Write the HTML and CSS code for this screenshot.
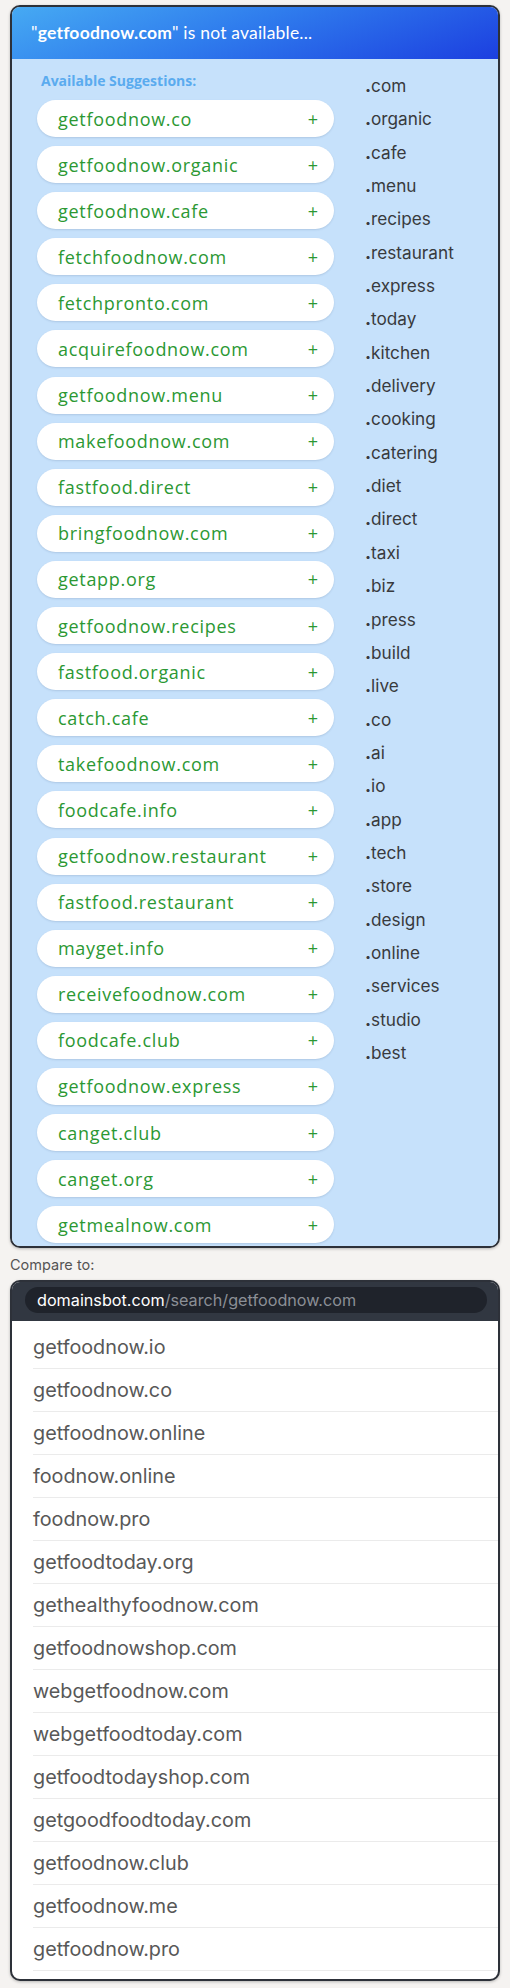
FILE: index.html
```html
<!DOCTYPE html>
<html>
<head>
<meta charset="utf-8">
<link rel="stylesheet" href="styles.css">
</head>
<body>
<div class="card">
  <div class="card-head">"<b>getfoodnow.com</b>" is not available...</div>
  <div class="card-body">
    <div class="sugg">
      <div class="label">Available Suggestions:</div>
      <div class="pills">
        <div class="pill"><span>getfoodnow.co</span><span class="plus">+</span></div>
        <div class="pill"><span>getfoodnow.organic</span><span class="plus">+</span></div>
        <div class="pill"><span>getfoodnow.cafe</span><span class="plus">+</span></div>
        <div class="pill"><span>fetchfoodnow.com</span><span class="plus">+</span></div>
        <div class="pill"><span>fetchpronto.com</span><span class="plus">+</span></div>
        <div class="pill"><span>acquirefoodnow.com</span><span class="plus">+</span></div>
        <div class="pill"><span>getfoodnow.menu</span><span class="plus">+</span></div>
        <div class="pill"><span>makefoodnow.com</span><span class="plus">+</span></div>
        <div class="pill"><span>fastfood.direct</span><span class="plus">+</span></div>
        <div class="pill"><span>bringfoodnow.com</span><span class="plus">+</span></div>
        <div class="pill"><span>getapp.org</span><span class="plus">+</span></div>
        <div class="pill"><span>getfoodnow.recipes</span><span class="plus">+</span></div>
        <div class="pill"><span>fastfood.organic</span><span class="plus">+</span></div>
        <div class="pill"><span>catch.cafe</span><span class="plus">+</span></div>
        <div class="pill"><span>takefoodnow.com</span><span class="plus">+</span></div>
        <div class="pill"><span>foodcafe.info</span><span class="plus">+</span></div>
        <div class="pill"><span>getfoodnow.restaurant</span><span class="plus">+</span></div>
        <div class="pill"><span>fastfood.restaurant</span><span class="plus">+</span></div>
        <div class="pill"><span>mayget.info</span><span class="plus">+</span></div>
        <div class="pill"><span>receivefoodnow.com</span><span class="plus">+</span></div>
        <div class="pill"><span>foodcafe.club</span><span class="plus">+</span></div>
        <div class="pill"><span>getfoodnow.express</span><span class="plus">+</span></div>
        <div class="pill"><span>canget.club</span><span class="plus">+</span></div>
        <div class="pill"><span>canget.org</span><span class="plus">+</span></div>
        <div class="pill"><span>getmealnow.com</span><span class="plus">+</span></div>
      </div>
    </div>
    <ul class="tlds">
      <li><b>.</b>com</li><li><b>.</b>organic</li><li><b>.</b>cafe</li><li><b>.</b>menu</li><li><b>.</b>recipes</li>
      <li><b>.</b>restaurant</li><li><b>.</b>express</li><li><b>.</b>today</li><li><b>.</b>kitchen</li><li><b>.</b>delivery</li>
      <li><b>.</b>cooking</li><li><b>.</b>catering</li><li><b>.</b>diet</li><li><b>.</b>direct</li><li><b>.</b>taxi</li>
      <li><b>.</b>biz</li><li><b>.</b>press</li><li><b>.</b>build</li><li><b>.</b>live</li><li><b>.</b>co</li>
      <li><b>.</b>ai</li><li><b>.</b>io</li><li><b>.</b>app</li><li><b>.</b>tech</li><li><b>.</b>store</li>
      <li><b>.</b>design</li><li><b>.</b>online</li><li><b>.</b>services</li><li><b>.</b>studio</li><li><b>.</b>best</li>
    </ul>
  </div>
</div>
<div class="compare">Compare to:</div>
<div class="browser">
  <div class="browser-head">
    <div class="addr"><span class="host">domainsbot.com</span><span class="path">/search/getfoodnow.com</span></div>
  </div>
  <ul class="results">
    <li>getfoodnow.io</li>
    <li>getfoodnow.co</li>
    <li>getfoodnow.online</li>
    <li>foodnow.online</li>
    <li>foodnow.pro</li>
    <li>getfoodtoday.org</li>
    <li>gethealthyfoodnow.com</li>
    <li>getfoodnowshop.com</li>
    <li>webgetfoodnow.com</li>
    <li>webgetfoodtoday.com</li>
    <li>getfoodtodayshop.com</li>
    <li>getgoodfoodtoday.com</li>
    <li>getfoodnow.club</li>
    <li>getfoodnow.me</li>
    <li>getfoodnow.pro</li>
  </ul>
</div>
</body>
</html>
```
FILE: styles.css
```css
* { box-sizing: border-box; }
html, body { margin: 0; padding: 0; }
body {
  background: #f5f3f1;
  padding: 5px 10px 4px;
  font-family: "Inter", "Liberation Sans", sans-serif;
  width: 510px;
}
.card {
  border: 2px solid #2d3139;
  border-radius: 10px;
  overflow: hidden;
  box-shadow: 0 1px 3px rgba(0,0,0,0.25);
}
.card-head {
  height: 52px;
  line-height: 52px;
  padding-left: 19px;
  color: #fff;
  font-family: "Lato", "Open Sans", sans-serif;
  font-size: 17.5px;
  letter-spacing: 0.2px;
  background: linear-gradient(160deg, #46aaf3 0%, #2f7ced 45%, #1c3fe0 100%);
}
.card-head b { font-weight: 700; }
.card-body {
  background: #c6e1fb;
  display: flex;
  padding: 12px 0 3px 25px;
}
.sugg { width: 297px; flex: none; }
.label {
  height: 20px;
  line-height: 20px;
  margin: 0 0 9px 4px;
  color: #5aabef;
  font-family: "Open Sans", sans-serif;
  font-weight: 700;
  font-size: 14px;
}
.pills { display: flex; flex-direction: column; gap: 9.1px; }
.pill {
  height: 37px;
  background: #fff;
  border-radius: 19px;
  display: flex;
  align-items: center;
  justify-content: space-between;
  padding: 0 16px 0 21px;
  color: #2b9833;
  font-family: "Open Sans", sans-serif;
  font-size: 18px;
  letter-spacing: 0.7px;
  box-shadow: 0 1px 2px rgba(60,90,130,0.18);
}
.plus { font-size: 18px; letter-spacing: 0; }
.tlds {
  list-style: none;
  margin: -2px 0 0 31px;
  padding: 0;
  color: #383a3d;
  font-size: 17.2px;
}
.tlds li { height: 33.35px; line-height: 33.35px; white-space: nowrap; }
.tlds b { font-weight: 800; }
.compare {
  height: 32px;
  line-height: 24px;
  padding-top: 5px;
  color: #555;
  font-size: 14.5px;
}
.browser {
  border: 2px solid #2d3139;
  border-radius: 10px;
  overflow: hidden;
  background: #fff;
  box-shadow: 0 1px 3px rgba(0,0,0,0.25);
}
.browser-head {
  background: #313741;
  padding: 5px 11px 8px 13px;
}
.addr {
  height: 26px;
  line-height: 26px;
  background: #1f232b;
  border-radius: 13px;
  padding-left: 12px;
  font-size: 16.2px;
  white-space: nowrap;
}
.host { color: #fff; }
.path { color: #8b8f96; }
.results {
  list-style: none;
  margin: 0;
  padding: 5px 0 8px 21px;
}
.results li {
  height: 43px;
  line-height: 42px;
  border-bottom: 1px solid #ebebeb;
  color: #585858;
  font-size: 19.8px;
  font-weight: 400;
}
```
